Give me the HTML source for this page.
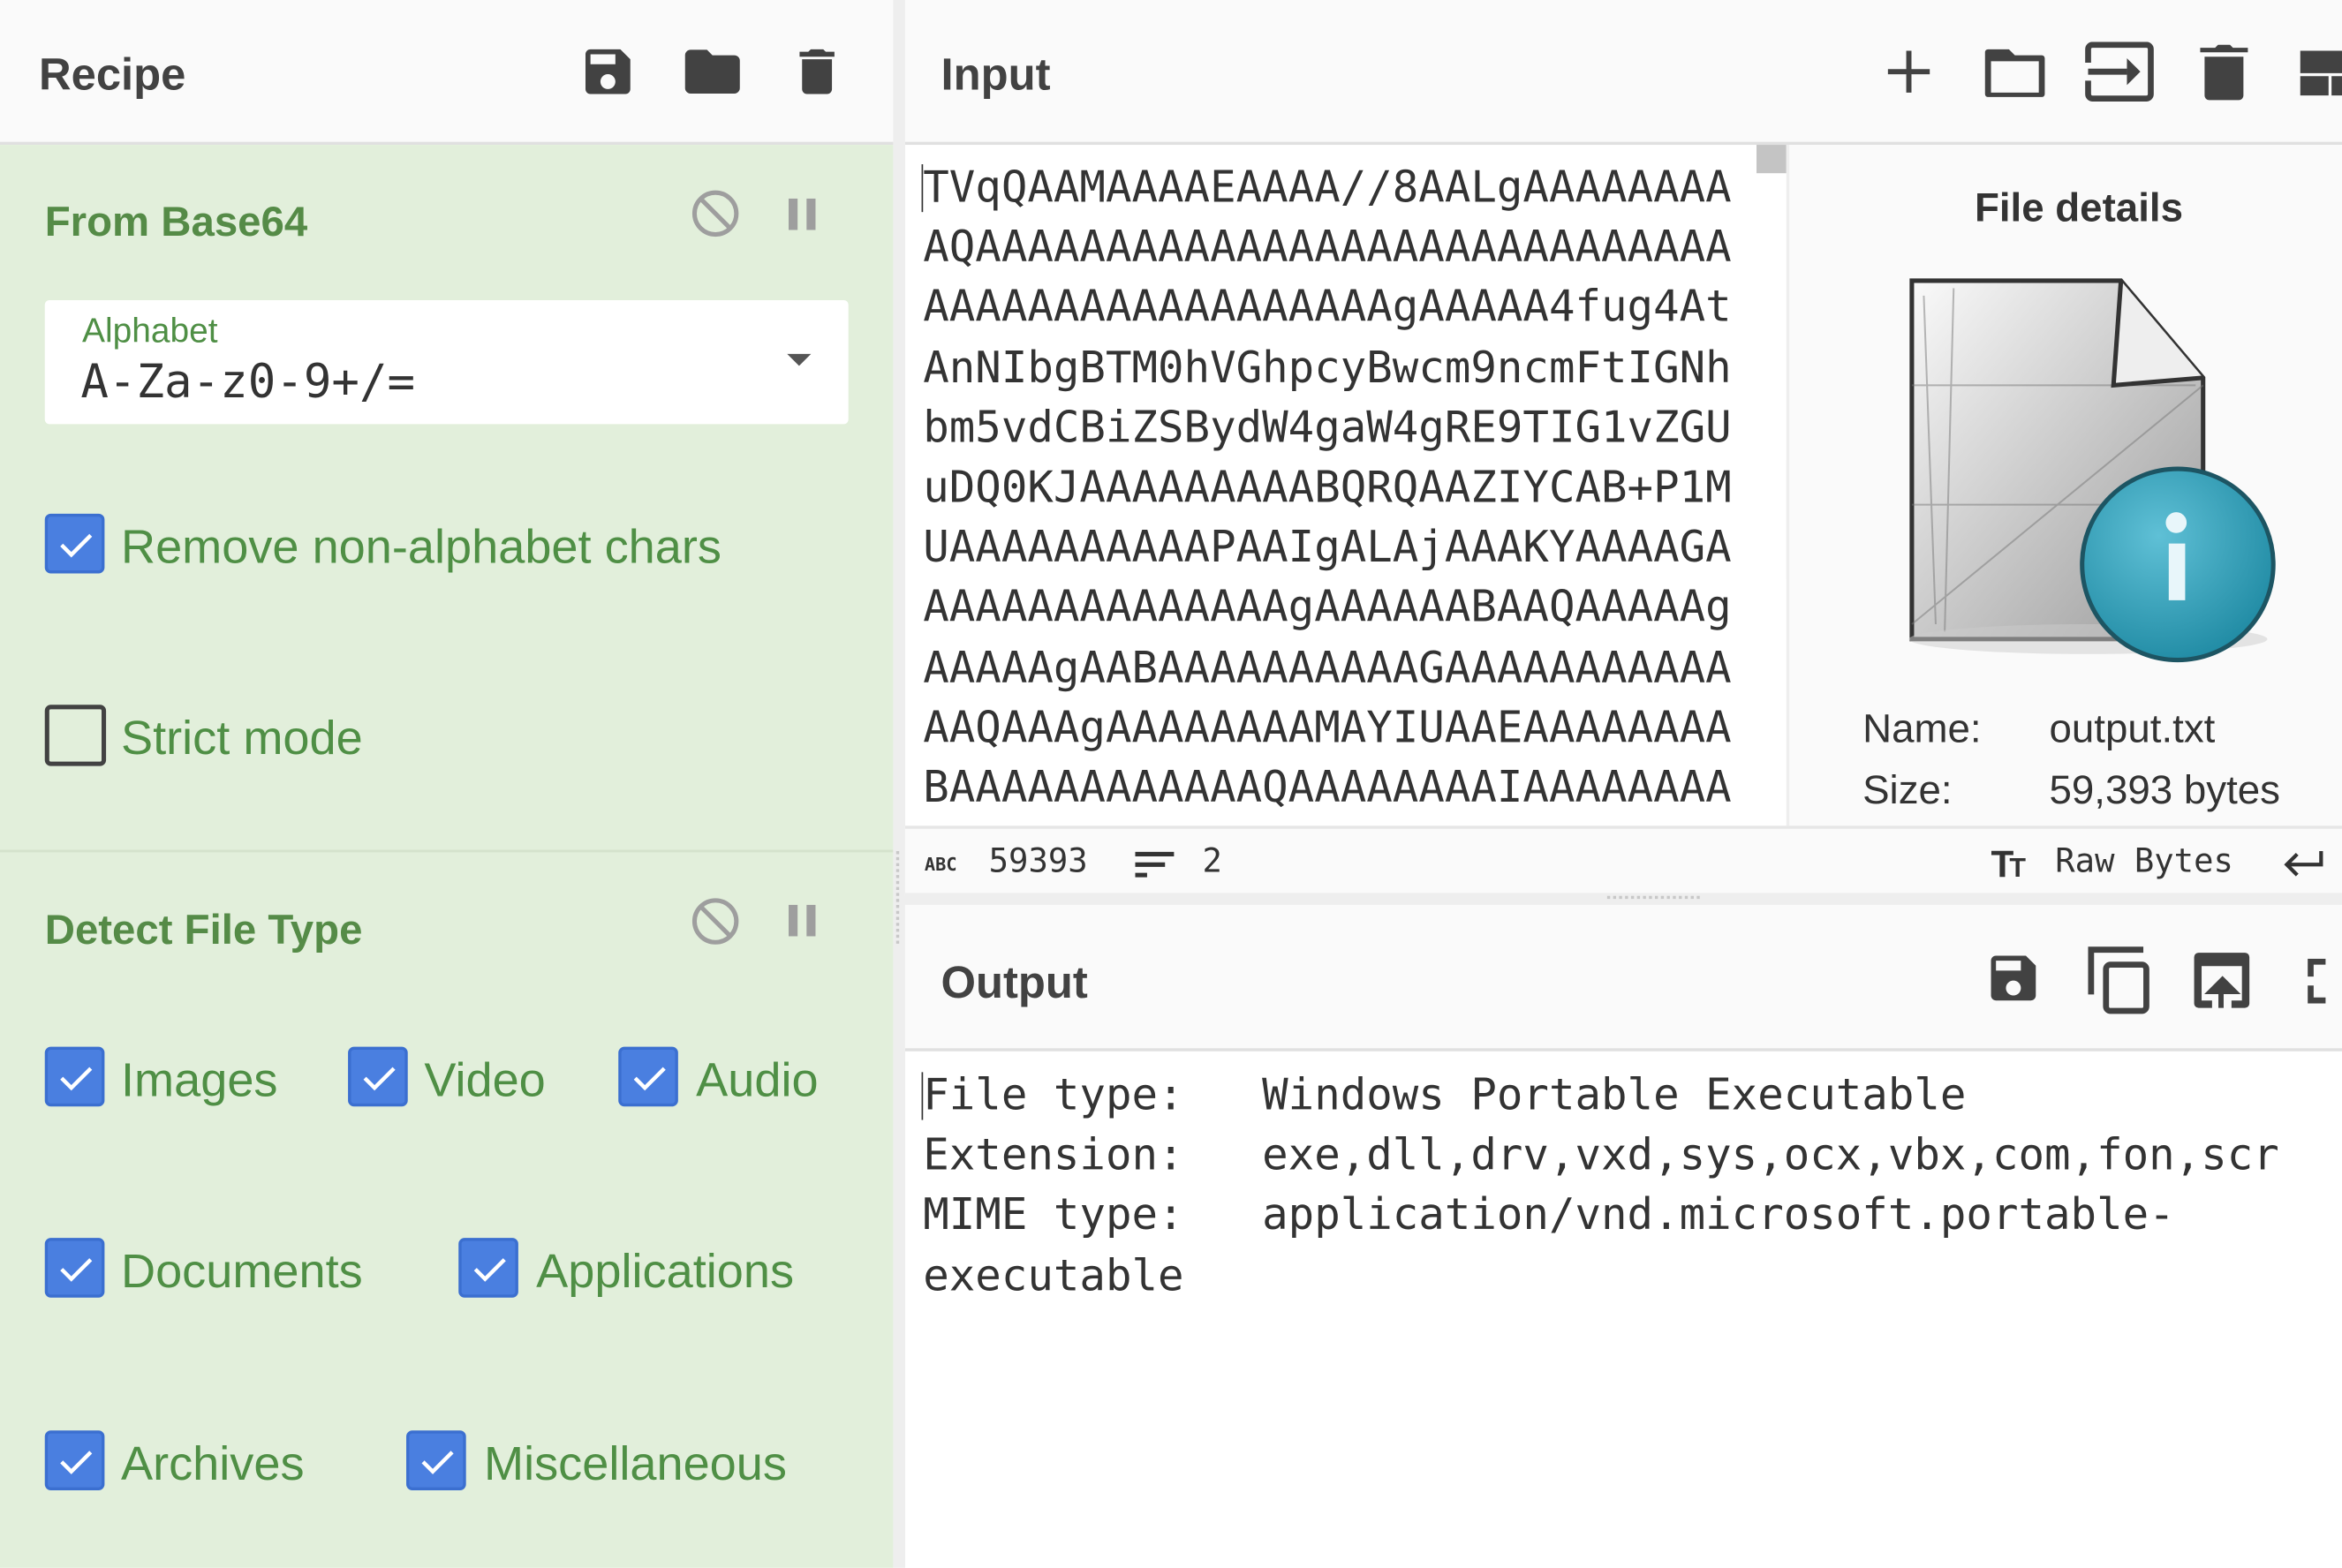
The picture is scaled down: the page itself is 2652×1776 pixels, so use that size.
<!DOCTYPE html>
<html><head><meta charset="utf-8"><style>
html,body{margin:0;padding:0;width:2652px;height:1776px;overflow:hidden;background:#fff}
#s{position:absolute;left:0;top:0;width:1568px;height:1050px;transform:scale(1.69133);transform-origin:0 0;font-family:"Liberation Sans",sans-serif;color:#424242;overflow:hidden}
.a{position:absolute}
.hdr{background:#fafafa;border-bottom:2px solid #e0e0e0}
.title{font-weight:bold;font-size:30px;color:#424242}
.green{background:#e2efdb}
.gh{font-weight:bold;font-size:28px;color:#558b47}
.gt{font-size:32px;color:#4f8f45}
.cb{width:36px;height:36px;border-radius:4px;background:#4a7fe0;border:2px solid #3b6fd0}
.cb svg{position:absolute;left:5px;top:6px}
.cbu{border-radius:4px;border:3px solid #424242;box-sizing:border-box;width:41px;height:41px}
.mono{font-family:"DejaVu Sans Mono","Liberation Mono",monospace;font-size:29px;color:#333;white-space:pre;line-height:40.2px}
</style></head><body><div id="s">
<!-- left -->
<div class="a hdr" style="left:0;top:0;width:598px;height:95px"></div>
<div class="a title" style="left:26px;top:34px">Recipe</div>
<svg class="a" style="left:387px;top:28px" width="40" height="40" viewBox="0 0 24 24"><path fill="#424242" d="M17 3H5a2 2 0 0 0-2 2v14a2 2 0 0 0 2 2h14a2 2 0 0 0 2-2V7l-4-4zm-5 16a3 3 0 1 1 0-6 3 3 0 0 1 0 6zm3-10H5V5h10v4z"/></svg>
<svg class="a" style="left:455px;top:26px" width="44" height="44" viewBox="0 0 24 24"><path fill="#424242" d="M10 4H4a2 2 0 0 0-2 2v12a2 2 0 0 0 2 2h16a2 2 0 0 0 2-2V8a2 2 0 0 0-2-2h-8l-2-2z"/></svg>
<svg class="a" style="left:527px;top:26px" width="40" height="44" viewBox="0 0 24 24"><path fill="#424242" d="M6 19a2 2 0 0 0 2 2h8a2 2 0 0 0 2-2V7H6v12zM19 4h-3.5l-1-1h-5l-1 1H5v2h14V4z"/></svg>

<div class="a green" style="left:0;top:97px;width:598px;height:472px"></div>
<div class="a" style="left:0;top:569px;width:598px;height:2px;background:#d4e3cc"></div>
<div class="a green" style="left:0;top:571px;width:598px;height:479px"></div>

<div class="a gh" style="left:30px;top:133px">From Base64</div>
<svg class="a" style="left:462px;top:126px" width="34" height="34" viewBox="0 0 34 34"><circle cx="17" cy="17" r="14" fill="none" stroke="#9e9e9e" stroke-width="3"/><line x1="7" y1="7" x2="27" y2="27" stroke="#9e9e9e" stroke-width="3"/></svg>
<div class="a" style="left:528px;top:133px;width:6px;height:21px;background:#9e9e9e"></div>
<div class="a" style="left:540px;top:133px;width:6px;height:21px;background:#9e9e9e"></div>

<div class="a" style="left:30px;top:201px;width:538px;height:83px;background:#fff;border-radius:3px"></div>
<div class="a" style="left:55px;top:208px;font-size:23px;color:#4f8f45">Alphabet</div>
<div class="a" style="left:54px;top:238px;font-family:'DejaVu Sans Mono',monospace;font-size:31px;color:#333">A-Za-z0-9+/=</div>
<div class="a" style="left:527px;top:237px;width:0;height:0;border-left:8px solid transparent;border-right:8px solid transparent;border-top:8px solid #555"></div>

<div class="a cb" style="left:30px;top:344px"><svg width="28" height="26" viewBox="0 0 24 24"><path d="M3 12l6 6L21 6" fill="none" stroke="#fff" stroke-width="2.4"/></svg></div>
<div class="a gt" style="left:81px;top:348px">Remove non-alphabet chars</div>
<div class="a cbu" style="left:30px;top:472px"></div>
<div class="a gt" style="left:81px;top:476px">Strict mode</div>

<div class="a gh" style="left:30px;top:607px">Detect File Type</div>
<svg class="a" style="left:462px;top:600px" width="34" height="34" viewBox="0 0 34 34"><circle cx="17" cy="17" r="14" fill="none" stroke="#9e9e9e" stroke-width="3"/><line x1="7" y1="7" x2="27" y2="27" stroke="#9e9e9e" stroke-width="3"/></svg>
<div class="a" style="left:528px;top:606px;width:6px;height:21px;background:#9e9e9e"></div>
<div class="a" style="left:540px;top:606px;width:6px;height:21px;background:#9e9e9e"></div>

<div class="a cb" style="left:30px;top:701px"><svg width="28" height="26" viewBox="0 0 24 24"><path d="M3 12l6 6L21 6" fill="none" stroke="#fff" stroke-width="2.4"/></svg></div>
<div class="a gt" style="left:81px;top:705px">Images</div>
<div class="a cb" style="left:233px;top:701px"><svg width="28" height="26" viewBox="0 0 24 24"><path d="M3 12l6 6L21 6" fill="none" stroke="#fff" stroke-width="2.4"/></svg></div>
<div class="a gt" style="left:284px;top:705px">Video</div>
<div class="a cb" style="left:414px;top:701px"><svg width="28" height="26" viewBox="0 0 24 24"><path d="M3 12l6 6L21 6" fill="none" stroke="#fff" stroke-width="2.4"/></svg></div>
<div class="a gt" style="left:466px;top:705px">Audio</div>

<div class="a cb" style="left:30px;top:829px"><svg width="28" height="26" viewBox="0 0 24 24"><path d="M3 12l6 6L21 6" fill="none" stroke="#fff" stroke-width="2.4"/></svg></div>
<div class="a gt" style="left:81px;top:833px">Documents</div>
<div class="a cb" style="left:307px;top:829px"><svg width="28" height="26" viewBox="0 0 24 24"><path d="M3 12l6 6L21 6" fill="none" stroke="#fff" stroke-width="2.4"/></svg></div>
<div class="a gt" style="left:359px;top:833px">Applications</div>

<div class="a cb" style="left:30px;top:958px"><svg width="28" height="26" viewBox="0 0 24 24"><path d="M3 12l6 6L21 6" fill="none" stroke="#fff" stroke-width="2.4"/></svg></div>
<div class="a gt" style="left:81px;top:962px">Archives</div>
<div class="a cb" style="left:272px;top:958px"><svg width="28" height="26" viewBox="0 0 24 24"><path d="M3 12l6 6L21 6" fill="none" stroke="#fff" stroke-width="2.4"/></svg></div>
<div class="a gt" style="left:324px;top:962px">Miscellaneous</div>

<!-- divider -->
<div class="a" style="left:598px;top:0;width:8px;height:1050px;background:#eeeeee"></div>
<div class="a" style="left:600px;top:570px;width:3px;height:62px;border-left:2px dotted #c8c8c8"></div>

<!-- input -->
<div class="a hdr" style="left:606px;top:0;width:962px;height:95px"></div>
<div class="a title" style="left:630px;top:34px">Input</div>
<svg class="a" style="left:1262px;top:32px" width="32" height="32" viewBox="0 0 32 32"><path d="M16 2v28M2 16h28" stroke="#424242" stroke-width="3.5"/></svg>
<svg class="a" style="left:1327px;top:29px" width="44" height="38" viewBox="0 0 44 38"><path d="M4 4h14l4 4h18a2 2 0 0 1 2 2v24a2 2 0 0 1-2 2H4a2 2 0 0 1-2-2V6a2 2 0 0 1 2-2zM6 12v21h32V12z" fill="#424242" fill-rule="evenodd"/></svg>
<svg class="a" style="left:1396px;top:28px" width="46" height="40" viewBox="0 0 46 40"><path d="M2 14V5a3 3 0 0 1 3-3h36a3 3 0 0 1 3 3v30a3 3 0 0 1-3 3H5a3 3 0 0 1-3-3v-9" fill="none" stroke="#424242" stroke-width="4"/><path d="M2 20h26" stroke="#424242" stroke-width="4"/><path d="M28 11l9 9-9 9z" fill="#424242"/></svg>
<svg class="a" style="left:1473px;top:28px" width="32" height="40" viewBox="0 0 32 40"><path d="M0 4h10l2-2h8l2 2h10v3H0zM3 10h26v26a3 3 0 0 1-3 3H6a3 3 0 0 1-3-3z" fill="#424242"/></svg>
<svg class="a" style="left:1540px;top:34px" width="30" height="30" viewBox="0 0 30 30"><path d="M0 0h30v15H0zM0 17h19v13H0zM21 17h9v13h-9z" fill="#424242"/></svg>

<div class="a mono" style="left:618px;top:105px">TVqQAAMAAAAEAAAA//8AALgAAAAAAAA
AQAAAAAAAAAAAAAAAAAAAAAAAAAAAAA
AAAAAAAAAAAAAAAAAAgAAAAA4fug4At
AnNIbgBTM0hVGhpcyBwcm9ncmFtIGNh
bm5vdCBiZSBydW4gaW4gRE9TIG1vZGU
uDQ0KJAAAAAAAAABQRQAAZIYCAB+P1M
UAAAAAAAAAAPAAIgALAjAAAKYAAAAGA
AAAAAAAAAAAAAAgAAAAAABAAQAAAAAg
AAAAAgAABAAAAAAAAAAGAAAAAAAAAAA
AAQAAAgAAAAAAAAMAYIUAAEAAAAAAAA
BAAAAAAAAAAAAQAAAAAAAAIAAAAAAAA</div>
<div class="a" style="left:617px;top:110px;width:1px;height:32px;background:#333"></div>
<div class="a" style="left:1176px;top:97px;width:20px;height:19px;background:#c4c4c4"></div>
<div class="a" style="left:1196px;top:308px;width:18px;height:80px;background:#ececec;border-radius:0 6px 6px 0"></div>
<div class="a" style="left:1197px;top:334px;font-size:26px;color:#888">›</div>

<div class="a" style="left:1196px;top:97px;width:372px;height:456px;background:#fafafa;border-left:2px solid #eee"></div>
<div class="a" style="left:1322px;top:124px;font-weight:bold;font-size:27px;color:#333">File details</div>
<svg class="a" style="left:1258px;top:178px" width="275" height="270" viewBox="0 0 275 270">
<defs><linearGradient id="g" x1="0" y1="0" x2="1" y2="1"><stop offset="0" stop-color="#fafafa"/><stop offset="1" stop-color="#9a9a9a"/></linearGradient>
<radialGradient id="t" cx="0.4" cy="0.35" r="0.7"><stop offset="0" stop-color="#5fc0d6"/><stop offset="1" stop-color="#1f8aa3"/></radialGradient></defs>
<path d="M22 10h140l55 65v175H22z" fill="url(#g)" stroke="#333" stroke-width="3"/>
<path d="M30 20l8 220M50 15l-6 230M22 80h190M22 160h180M22 240l195-160" stroke="#777" stroke-width="1.2" fill="none" opacity="0.5"/>
<path d="M162 10l-5 70 60-5" fill="#eee" stroke="#333" stroke-width="3"/>
<ellipse cx="140" cy="250" rx="120" ry="10" fill="#ccc" opacity="0.5"/>
<circle cx="200" cy="200" r="64" fill="url(#t)" stroke="#1d5563" stroke-width="3"/>
<circle cx="199" cy="172" r="7" fill="#e8f6fa"/>
<path d="M194 186h11v38h-11z" fill="#e8f6fa"/>
</svg>
<div class="a" style="left:1247px;top:473px;font-size:27px;color:#333">Name:</div>
<div class="a" style="left:1372px;top:473px;font-size:27px;color:#333">output.txt</div>
<div class="a" style="left:1247px;top:514px;font-size:27px;color:#333">Size:</div>
<div class="a" style="left:1372px;top:514px;font-size:27px;color:#333">59,393 bytes</div>

<!-- status bar -->
<div class="a" style="left:606px;top:553px;width:962px;height:45px;background:#fafafa;border-top:2px solid #e6e6e6"></div>
<div class="a" style="left:619px;top:572px;font-family:'DejaVu Sans Mono',monospace;font-weight:bold;font-size:12px;color:#333">ABC</div>
<div class="a" style="left:662px;top:565px;font-family:'DejaVu Sans Mono',monospace;font-size:22px;color:#333">59393</div>
<svg class="a" style="left:760px;top:569px" width="28" height="20" viewBox="0 0 28 20"><path d="M0 3h26M0 10h20M0 17h8" stroke="#333" stroke-width="3"/></svg>
<div class="a" style="left:805px;top:565px;font-family:'DejaVu Sans Mono',monospace;font-size:22px;color:#333">2</div>
<div class="a" style="left:1333px;top:565px;font-weight:bold;font-size:25px;color:#333;letter-spacing:-3px">T<span style="font-size:18px">T</span></div>
<div class="a" style="left:1376px;top:565px;font-family:'DejaVu Sans Mono',monospace;font-size:22px;color:#333">Raw Bytes</div>
<svg class="a" style="left:1528px;top:568px" width="28" height="22" viewBox="0 0 28 22"><path d="M26 2v9H4M10 4l-7 7 7 7" fill="none" stroke="#333" stroke-width="2.5"/></svg>
<div class="a" style="left:606px;top:598px;width:962px;height:8px;background:#eeeeee"></div>
<div class="a" style="left:1076px;top:600px;width:62px;height:3px;border-top:2px dotted #c8c8c8"></div>

<!-- output -->
<div class="a hdr" style="left:606px;top:606px;width:962px;height:96px"></div>
<div class="a title" style="left:630px;top:642px">Output</div>
<svg class="a" style="left:1328px;top:635px" width="40" height="40" viewBox="0 0 24 24"><path fill="#424242" d="M17 3H5a2 2 0 0 0-2 2v14a2 2 0 0 0 2 2h14a2 2 0 0 0 2-2V7l-4-4zm-5 16a3 3 0 1 1 0-6 3 3 0 0 1 0 6zm3-10H5V5h10v4z"/></svg>
<svg class="a" style="left:1397px;top:633px" width="44" height="48" viewBox="0 0 44 48"><path d="M3 33V3h35" fill="none" stroke="#424242" stroke-width="4"/><rect x="13" y="13" width="27" height="31" rx="3" fill="none" stroke="#424242" stroke-width="4"/></svg>
<svg class="a" style="left:1467px;top:637px" width="42" height="40" viewBox="0 0 42 40"><path d="M2 4a3 3 0 0 1 3-3h31a3 3 0 0 1 3 3v31a3 3 0 0 1-3 3h-9v-5h7V10H7v23h7v5H5a3 3 0 0 1-3-3z" fill="#424242"/><path d="M20 38V22M13 27l8-8 8 8z" stroke="#424242" stroke-width="3.5" fill="#424242"/></svg>
<svg class="a" style="left:1545px;top:642px" width="30" height="30" viewBox="0 0 30 30"><path d="M2 12V2h10M2 18v10h10" fill="none" stroke="#424242" stroke-width="4"/></svg>

<div class="a mono" style="left:618px;top:713px">File type:   Windows Portable Executable
Extension:   exe,dll,drv,vxd,sys,ocx,vbx,com,fon,scr
MIME type:   application/vnd.microsoft.portable-
executable</div>
<div class="a" style="left:617px;top:718px;width:1px;height:32px;background:#333"></div>
</div></body></html>
